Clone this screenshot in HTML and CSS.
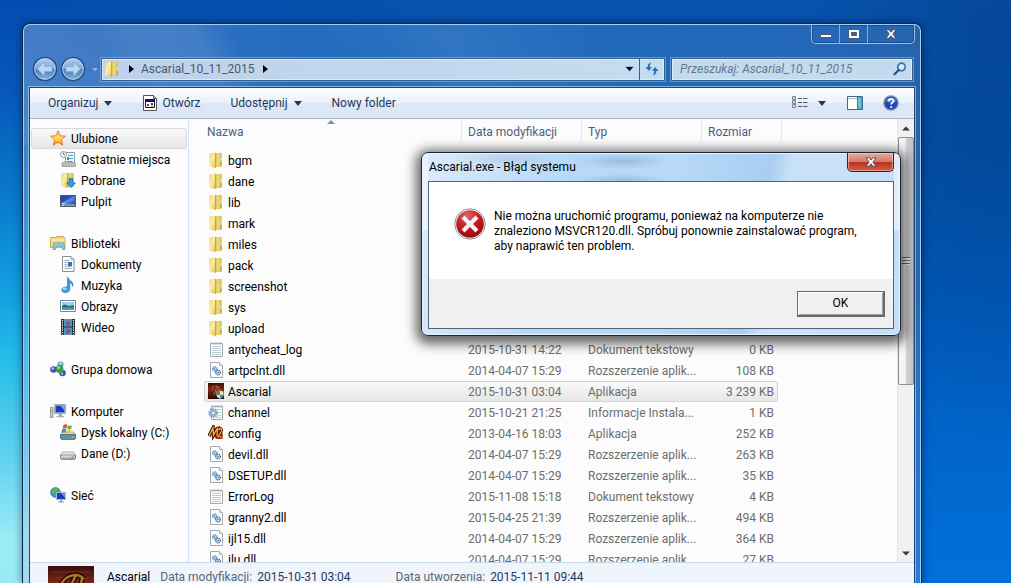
FILE: index.html
```html
<!DOCTYPE html>
<html lang="pl">
<head>
<meta charset="utf-8">
<title>Ascarial_10_11_2015</title>
<link rel="stylesheet" href="styles.css">
</head>
<body>
<svg class="sprites" aria-hidden="true">
  <defs>
    <linearGradient id="gFold" x1="0" x2="1" y1="0" y2="1"><stop offset="0" stop-color="#ecd67a"/><stop offset=".45" stop-color="#f9eea6"/><stop offset="1" stop-color="#dcbc4c"/></linearGradient>
    <linearGradient id="gBlue" x1="0" y1="0" x2="1" y2="1"><stop offset="0" stop-color="#1b3fa8"/><stop offset=".5" stop-color="#5e8fe4"/><stop offset="1" stop-color="#0b2a88"/></linearGradient>
    <linearGradient id="gStar" x1="0" y1="0" x2="0" y2="1"><stop offset="0" stop-color="#ffd060"/><stop offset=".5" stop-color="#ffdf66"/><stop offset="1" stop-color="#f9901c"/></linearGradient>
    <linearGradient id="gGrey" x1="0" y1="0" x2="0" y2="1"><stop offset="0" stop-color="#f5f5f5"/><stop offset="1" stop-color="#9a9fa3"/></linearGradient>
    <radialGradient id="gErr" cx=".4" cy=".2" r=".9"><stop offset="0" stop-color="#e06568"/><stop offset=".5" stop-color="#c41a1e"/><stop offset="1" stop-color="#8a0508"/></radialGradient>
    <linearGradient id="gNav" x1="0" y1="0" x2="0" y2="1"><stop offset="0" stop-color="#b4d0ee"/><stop offset=".48" stop-color="#7fa9d8"/><stop offset=".52" stop-color="#4a82c0"/><stop offset="1" stop-color="#7fb4e4"/></linearGradient>
    <linearGradient id="gExe" x1="0" y1="0" x2="0" y2="1"><stop offset="0" stop-color="#3a0d0b"/><stop offset=".4" stop-color="#802a1a"/><stop offset="1" stop-color="#2a0807"/></linearGradient>
  </defs>
  <symbol id="i-folder" viewBox="0 0 16 16">
    <path d="M7 1.500l6-.7.800.7v12.700l-.8.800H7z" fill="#dfc257"/>
    <path d="M8.300 1.800l3.200-.4v13l-3.200.4z" fill="#efd976"/>
    <path d="M1.200 1.600L6.800.5l1.200.7v14.300l-1 .3-5.800-1.400z" fill="url(#gFold)"/>
    <path d="M7 .7l1.200.5v14.300l-1.200.3z" fill="#c9a63e"/>
    <path d="M12.600 10.500h1v3h-1z" fill="#6fa27c"/><path d="M12.600 6.500h1v2h-1z" fill="#fffbe0"/>
  </symbol>
  <symbol id="i-text" viewBox="0 0 16 16">
    <path d="M2.500 2.500h12v13h-12z" fill="#fcfdfe" stroke="#a3a8ad"/>
    <path d="M3 1v3M5 1v3M7 1v3M9 1v3M11 1v3M13 1v3" stroke="#b0b5b9" stroke-width=".8"/>
    <path d="M4 5.500h9M4 7.500h9M4 9.500h9M4 11.500h9M4 13.500h9" stroke="#b6cdd3"/>
  </symbol>
  <symbol id="i-dll" viewBox="0 0 16 16">
    <path d="M2.500.5h9l3 3v12h-12z" fill="#fcfdfe" stroke="#a3a8ad"/>
    <path d="M11.500.5v3h3" fill="#e8ebee" stroke="#a3a8ad" stroke-width=".8"/>
    <circle cx="6.800" cy="7" r="2.100" fill="#dcecf8" stroke="#4f7fae" stroke-width="1.300" stroke-dasharray="1 .5"/>
    <circle cx="10" cy="10.500" r="2.300" fill="#dcecf8" stroke="#3b6d9f" stroke-width="1.400" stroke-dasharray="1 .5"/>
    <circle cx="6.800" cy="7" r=".7" fill="#2d6aa5"/><circle cx="10" cy="10.500" r=".8" fill="#2d6aa5"/>
  </symbol>
  <symbol id="i-ini" viewBox="0 0 16 16">
    <path d="M3.500 2.500h11v13h-11z" fill="#fcfdfe" stroke="#a3a8ad"/>
    <path d="M4 1v3M6 1v3M8 1v3M10 1v3M12 1v3M14 1v3" stroke="#b0b5b9" stroke-width=".8"/>
    <path d="M7 5.500h6M10 8.500h3M10 11.500h3M8 13.500h5" stroke="#b6cdd3"/>
    <circle cx="5.200" cy="9" r="4" fill="#a9c6dc" stroke="#7c9fbb" stroke-width="1.800" stroke-dasharray="1.500 1"/>
    <circle cx="5.200" cy="9" r="2" fill="#e8f2f8" stroke="#5d87aa" stroke-width=".8"/>
  </symbol>
  <symbol id="i-exe" viewBox="0 0 16 16">
    <path d="M0 0h16v16H0z" fill="url(#gExe)"/>
    <path d="M4 4.500c3-2.500 6-1.500 7 0l-1 7M9 4L6 12M4 5l1 2" fill="none" stroke="#a85c22" stroke-width="1.200"/>
    <path d="M8.500 8.500l3.500-1 3.500 1v3.500c0 2-2 3.200-3.500 4-1.500-.8-3.500-2-3.500-4z" fill="#efe28c"/>
    <path d="M12 7.500l-3.500 1V12H12zM12 12v4c1.500-.8 3.500-2 3.500-4z" fill="#3c7bd0"/>
  </symbol>
  <symbol id="i-config" viewBox="0 0 16 16">
    <path d="M8 2l4-1 2 5 1 6-8 1-2-5z" fill="#c3140e"/>
    <path d="M1 11l4-8 .5 7 4-7-.5 8" fill="none" stroke="#4a1604" stroke-width="3.400"/>
    <path d="M1 11l4-8 .5 7 4-7-.5 8M10.500 5c2-3 4-1 2.500 2l-3 5h5" fill="none" stroke="#4a1604" stroke-width="2.800"/>
    <path d="M1 11l4-8 .5 7 4-7-.5 8M10.500 5c2-3 4-1 2.500 2l-3 5h5" fill="none" stroke="#eeb64a" stroke-width="1.300"/>
    <path d="M8 13.500l3-1.500 4 .500-3 1.500z" fill="#c3140e"/>
  </symbol>
  <symbol id="i-star" viewBox="0 0 16 16">
    <path d="M8 .8l2.100 5 5.400.4-4.100 3.500 1.300 5.400L8 12.200l-4.700 2.900 1.300-5.400L.5 6.200l5.400-.4z" fill="url(#gStar)" stroke="#e0701c" stroke-width=".9"/>
  </symbol>
  <symbol id="i-recent" viewBox="0 0 16 16">
    <path d="M5.500 1.500h9v12h-9z" fill="#f4f9fc" stroke="#8aa0ad"/>
    <path d="M8 4.500h5M8 7.500h5M7 10.500h5" stroke="#4aa0cc"/><path d="M7 6h2v3H7z" fill="#3d97c8"/>
    <path d="M2 12l2-1h9l2.500 1v3.500H2z" fill="#b8bcbf" stroke="#85898c" stroke-width=".6"/>
    <circle cx="3.500" cy="3.500" r="3" fill="#f6f6f6" stroke="#8b9196" stroke-width=".9"/><path d="M3.500 1.500v2H5" fill="none" stroke="#555" stroke-width=".8"/>
  </symbol>
  <symbol id="i-down" viewBox="0 0 16 16">
    <use href="#i-folder" width="16" height="16"/>
    <path d="M9 6.500h4v4.500h2.500L11 15.700l-4.500-4.700H9z" fill="#2aa0e8" stroke="#1668ac" stroke-width=".7"/>
  </symbol>
  <symbol id="i-desk" viewBox="0 0 16 16">
    <path d="M.5 2.500h15v11H.5z" fill="url(#gBlue)" stroke="#4a5866"/><path d="M1 11h14v2H1z" fill="#7098bd"/><path d="M1 3h14L1 10z" fill="#173a9c" opacity=".6"/><path d="M2 10.500h3M2 12.500h2" stroke="#bfe0f4"/>
  </symbol>
  <symbol id="i-lib" viewBox="0 0 16 16">
    <path d="M.5 2.500h5l1-1h7l1.500 2v9H.5z" fill="#eed77b" stroke="#bf9e42" stroke-width=".8"/><path d="M1 5h14" stroke="#fff6bd"/>
    <path d="M3 14.500l1-6.500h9.500l1.500 6.500h-2.500l-.5-3.500H6l-.5 3.500z" fill="#8fd0ee" stroke="#4a9bc7" stroke-width=".8"/>
  </symbol>
  <symbol id="i-doc" viewBox="0 0 16 16">
    <path d="M2.500.5h8.500l3 3v12H2.500z" fill="#fcfdfe" stroke="#898f96"/><path d="M11 .5v3h3" fill="none" stroke="#898f96" stroke-width=".8"/>
    <path d="M4.500 4.500h5M4.500 6.500h3M4.500 8.500h3M4.500 10.500h7M4.500 12.500h7" stroke="#a0a8b4"/><path d="M8 6h4v4H8z" fill="#3472b5"/>
  </symbol>
  <symbol id="i-music" viewBox="0 0 16 16">
    <path d="M8 .5c1 3.500 6.500 4 4.500 9 .2-2.500-1.500-3.500-2.700-4v6.500c0 4.800-8 4.500-8 1 0-2.800 4-3.700 5.700-2.700V.5z" fill="#3e9fe0" stroke="#1767a8" stroke-width=".6"/>
    <ellipse cx="4.600" cy="11.800" rx="2" ry="1.200" fill="#9fd4f6"/>
  </symbol>
  <symbol id="i-pic" viewBox="0 0 16 16">
    <path d="M.5 2.500h15v11H.5z" fill="#fff" stroke="#7d858c"/><path d="M2 4h12v4H2z" fill="#9bd3f2"/><path d="M2 7.500l3-1 4 1.500 5-1V10H2z" fill="#2c7560"/><path d="M2 9.500h12V12H2z" fill="#4b9cc0"/>
  </symbol>
  <symbol id="i-video" viewBox="0 0 16 16">
    <path d="M1 0h14v16H1z" fill="#222b33"/><path d="M4 0h8v7.500H4zM4 8.500h8V16H4z" fill="#4f93cd"/><path d="M6 2l5 2-4 3.500zM7 8.500l4 4-5 3z" fill="#a34c3c"/>
    <path d="M2.500 1v15M13.500 1v15" stroke="#fff" stroke-width="1.200" stroke-dasharray="1.200 1.200"/>
  </symbol>
  <symbol id="i-group" viewBox="0 0 16 16">
    <circle cx="10.500" cy="3.500" r="3" fill="#5f9cc8"/><circle cx="3.500" cy="8.500" r="3.300" fill="#3657b8"/><circle cx="12.500" cy="12" r="3.300" fill="#3a50b4"/><circle cx="9.500" cy="8" r="3.900" fill="#3f9b46"/>
    <circle cx="2.800" cy="7.500" r="1.200" fill="#b5caf5"/><circle cx="8.500" cy="6.500" r="1.500" fill="#a8e09c"/><circle cx="12" cy="12.800" r="1.300" fill="#93a8ef"/><circle cx="10.500" cy="2.500" r="1.200" fill="#cfe6f5"/>
  </symbol>
  <symbol id="i-pc" viewBox="0 0 16 16">
    <path d="M.5 4.500h2.500v10H.5z" fill="#c5cdc4" stroke="#7d8680" stroke-width=".8"/><path d="M1 8h1v1H1z" fill="#46a43e"/>
    <path d="M4.500 1.500h11v9h-11z" fill="#dfe6ea" stroke="#8b98a3" stroke-width=".8"/><path d="M5.500 2.500h9v7h-9z" fill="#1739c4"/><path d="M10 2.500h4.500v5z" fill="#7ba4f2"/><path d="M8.500 11h3.500v2h2v1.200H6.500V13h2z" fill="#a3adb5"/>
  </symbol>
  <symbol id="i-drive" viewBox="0 0 16 16">
    <path d="M2.500 7h11l2 3.500H.5z" fill="#e8eaeb" stroke="#909599" stroke-width=".7"/><path d="M.5 10h15v3.500l-1 .9h-13l-1-.9z" fill="url(#gGrey)" stroke="#6e7478" stroke-width=".8"/><path d="M11.500 11.500h2.500v1.500h-2.500z" fill="#64b83a"/>
  </symbol>
  <symbol id="i-sys" viewBox="0 0 16 16">
    <path d="M2.500 8h11l2 3H.5z" fill="#c8dde4" stroke="#7f959c" stroke-width=".7"/><path d="M.5 10.500h15v4l-1 1h-13l-1-1z" fill="#5f91a4" stroke="#586870" stroke-width=".8"/><path d="M12 12h2v2h-2z" fill="#74d636"/>
    <path d="M3.500 1c1.500-1 3-.8 4 0L6.500 4.500c-1-.8-2.500-.8-4 0z" fill="#e5542a"/><path d="M8.200 1.300c1.300.8 2.600.6 4 0L11 5c-1.300.6-2.600.6-3.800-.2z" fill="#67b443"/><path d="M2.300 5.200c1.500-.9 3-.8 4 0l-1 3.600c-1.200-.8-2.600-.7-4 0z" fill="#398bd4"/><path d="M7 5.600c1.300.8 2.500.6 4 0L10 9c-1.300.6-2.700.6-4-.2z" fill="#f5c231"/>
  </symbol>
  <symbol id="i-net" viewBox="0 0 16 16">
    <circle cx="5.500" cy="5.500" r="5" fill="#3b93d8" stroke="#245f9c" stroke-width=".5"/><path d="M2 2.500c2-2 5-2 6-.5L6 5 3.500 6.500 1 6zM6 7l3 1-2 2.400H5z" fill="#52b94c"/>
    <path d="M6.500 5.500h9v7h-9z" fill="#1a38c0" stroke="#aeb9c2"/><path d="M11 6h4v5z" fill="#6a92ee"/><path d="M10 13h2v1.500h2v1H8v-1h2z" fill="#8f9aa3"/>
  </symbol>
  <symbol id="i-x" viewBox="0 0 12 10">
    <path d="M1 .8h3l2 2.400L8 .8h3L7.800 5 11 9.200H8L6 6.800 4 9.200H1L4.200 5z" fill="#fff" stroke="#4d4a5c" stroke-width=".9"/>
  </symbol>
</svg>

<main class="desktop">
  <section class="explorer" aria-label="Ascarial_10_11_2015">
    <header class="titlebar">
      <div class="caption">
        <button class="cap" aria-label="Minimalizuj"><svg width="12" height="10"><path d="M.500 5.500h11v3H.5z" fill="#fff" stroke="#4d5a75"/></svg></button>
        <button class="cap" aria-label="Maksymalizuj"><svg width="12" height="10"><path fill-rule="evenodd" d="M.5.5h11v9H.5zM3.500 3.500v3h5v-3z" fill="#fff" stroke="#4d5a75"/></svg></button>
        <button class="cap cap-close" aria-label="Zamknij"><svg width="12" height="10"><use href="#i-x"/></svg></button>
      </div>
    </header>

    <div class="navrow">
      <div class="history">
        <button class="round" aria-label="Wstecz"><svg width="26" height="26" viewBox="0 0 26 26"><circle cx="13" cy="13" r="11.500" fill="url(#gNav)" stroke="#274f85" stroke-width="1.500"/><circle cx="13" cy="13" r="10.300" fill="none" stroke="#c4dcf2" stroke-width=".8"/><path d="M5.500 13l7-7v4.500H20v5h-7.500V20z" fill="#bdd6ee" stroke="#7fa6d0" stroke-width=".6"/></svg></button>
        <button class="round" aria-label="Dalej"><svg width="26" height="26" viewBox="0 0 26 26"><circle cx="13" cy="13" r="11.500" fill="url(#gNav)" stroke="#274f85" stroke-width="1.500"/><circle cx="13" cy="13" r="10.300" fill="none" stroke="#c4dcf2" stroke-width=".8"/><path d="M20.500 13l-7-7v4.500H6v5h7.500V20z" fill="#bdd6ee" stroke="#7fa6d0" stroke-width=".6"/></svg></button>
        <button class="drop" aria-label="Ostatnie strony"><svg width="8" height="5"><path d="M0 .5h8L4 5z" fill="#88b5e6" stroke="#2a5c9c" stroke-width=".5"/></svg></button>
      </div>
      <div class="address">
        <svg class="ico" width="16" height="16"><use href="#i-folder"/></svg>
        <svg width="5" height="8"><path d="M0 0l5 4-5 4z" fill="#000"/></svg>
        <button class="crumb">Ascarial_10_11_2015</button>
        <svg width="5" height="8"><path d="M0 0l5 4-5 4z" fill="#000"/></svg>
        <button class="addr-drop" aria-label="Poprzednie lokalizacje"><svg width="9" height="6"><path d="M0 .5h9L4.500 5.500z" fill="#02034c" stroke="#e8f1fa" stroke-width=".5"/></svg></button>
        <button class="refresh" aria-label="Odśwież"><svg width="16" height="14" viewBox="0 0 16 14"><path d="M7.500.5C4.500.5 3.300 2.500 3.300 5H.8l4 4.200L8.500 5H6.200c0-2 .2-3 1.300-4.500zM8.500 13.500c3 0 4.200-2 4.200-4.500h2.500l-4-4.200L7.500 9h2.300c0 2-.2 3-1.300 4.500z" fill="#2d6fbe" stroke="#f0f7ff" stroke-width=".4"/></svg></button>
      </div>
      <label class="search">
        <input type="text" placeholder="Przeszukaj: Ascarial_10_11_2015" aria-label="Przeszukaj">
        <svg width="14" height="14" viewBox="0 0 14 14"><circle cx="8.500" cy="5" r="3.800" fill="#d6ebfb" stroke="#2c72bd" stroke-width="1.700"/><path d="M5.800 8L1.500 12.300" stroke="#1f4f94" stroke-width="2.200" stroke-linecap="round"/></svg>
      </label>
    </div>

    <div class="client">
      <nav class="commands" aria-label="Polecenia">
        <button class="cmd">Organizuj <i class="tri"></i></button>
        <button class="cmd cmd-open"><svg width="16" height="16" viewBox="0 0 16 16"><path d="M1.500.5h10l3 3v12h-13z" fill="#fff" stroke="#555"/><path d="M11.500.5v3h3" fill="#ccc" stroke="#555"/><path d="M3.500 4.500h9v8h-9z" fill="#fff" stroke="#111"/><path d="M3 4h10v3H3z" fill="#0a1470"/><path d="M5 9h2v2H5z" fill="#d02020"/><path d="M9 8h2v2H9z" fill="#2050b0"/><path d="M9 10.500h2v1H9z" fill="#c83030"/></svg> Otwórz</button>
        <button class="cmd">Udostępnij <i class="tri"></i></button>
        <button class="cmd cmd-new">Nowy folder</button>
        <div class="views">
          <button class="cmd" aria-label="Widok"><svg width="16" height="14" viewBox="0 0 16 14"><path d="M.5.500h3v3h-3zM.5 4.500h3v3h-3zM.5 8.500h3v3h-3z" fill="#fff" stroke="#7a8796"/><path d="M1.500 1.500h1v1h-1zM1.500 5.500h1v1h-1zM1.500 9.500h1v1h-1z" fill="#3c5f88"/><path d="M6 2.500h4M11 2.500h4.500M6 6.500h4M11 6.500h4.500M6 10.500h4M11 10.500h4.500" stroke="#4f5d70"/></svg></button>
          <button class="cmd" aria-label="Więcej opcji"><i class="tri"></i></button>
          <button class="cmd" aria-label="Okienko podglądu"><svg width="16" height="14"><path d="M.5.5h15v13H.5z" fill="#fff" stroke="#48657f"/><path d="M1 2.500h9" stroke="#a7bccd"/><path d="M10.500 1h4.500v12h-4.500z" fill="#6cc0da" stroke="#3c7c9c"/></svg></button>
          <button class="cmd" aria-label="Pomoc"><svg width="16" height="16" viewBox="0 0 16 16"><circle cx="8" cy="8" r="7.200" fill="#2347b4" stroke="#8a97b5" stroke-width="1.300"/><path d="M2.500 6C4 1.500 12 1.500 13.500 6 10 8 6 8 2.500 6z" fill="#7c9ae6" opacity=".7"/><path d="M5.700 6.200c0-3 4.800-3 4.800-.3 0 1.700-2.300 1.800-2.300 3.600" fill="none" stroke="#fff" stroke-width="1.700"/><circle cx="8.200" cy="12" r="1.100" fill="#fff"/></svg></button>
        </div>
      </nav>

      <div class="panes">
        <nav class="tree" aria-label="Okienko nawigacji">
          <ul>
            <li><a class="item selected" href="#"><svg class="ico"><use href="#i-star"/></svg>Ulubione</a></li>
            <li><a class="item sub" href="#"><svg class="ico"><use href="#i-recent"/></svg>Ostatnie miejsca</a></li>
            <li><a class="item sub" href="#"><svg class="ico"><use href="#i-down"/></svg>Pobrane</a></li>
            <li><a class="item sub" href="#"><svg class="ico"><use href="#i-desk"/></svg>Pulpit</a></li>
          </ul>
          <ul>
            <li><a class="item" href="#"><svg class="ico"><use href="#i-lib"/></svg>Biblioteki</a></li>
            <li><a class="item sub" href="#"><svg class="ico"><use href="#i-doc"/></svg>Dokumenty</a></li>
            <li><a class="item sub" href="#"><svg class="ico"><use href="#i-music"/></svg>Muzyka</a></li>
            <li><a class="item sub" href="#"><svg class="ico"><use href="#i-pic"/></svg>Obrazy</a></li>
            <li><a class="item sub" href="#"><svg class="ico"><use href="#i-video"/></svg>Wideo</a></li>
          </ul>
          <ul>
            <li><a class="item" href="#"><svg class="ico"><use href="#i-group"/></svg>Grupa domowa</a></li>
          </ul>
          <ul>
            <li><a class="item" href="#"><svg class="ico"><use href="#i-pc"/></svg>Komputer</a></li>
            <li><a class="item sub" href="#"><svg class="ico"><use href="#i-sys"/></svg>Dysk lokalny (C:)</a></li>
            <li><a class="item sub" href="#"><svg class="ico"><use href="#i-drive"/></svg>Dane (D:)</a></li>
          </ul>
          <ul>
            <li><a class="item" href="#"><svg class="ico"><use href="#i-net"/></svg>Sieć</a></li>
          </ul>
        </nav>

        <div class="files">
          <table>
            <colgroup><col class="c-name"><col class="c-date"><col class="c-type"><col class="c-size"></colgroup>
            <thead>
              <tr><th class="sorted">Nazwa</th><th>Data modyfikacji</th><th>Typ</th><th>Rozmiar</th></tr>
            </thead>
            <tbody>
              <tr><td><svg class="ico"><use href="#i-folder"/></svg>bgm</td><td></td><td></td><td></td></tr>
              <tr><td><svg class="ico"><use href="#i-folder"/></svg>dane</td><td></td><td></td><td></td></tr>
              <tr><td><svg class="ico"><use href="#i-folder"/></svg>lib</td><td></td><td></td><td></td></tr>
              <tr><td><svg class="ico"><use href="#i-folder"/></svg>mark</td><td></td><td></td><td></td></tr>
              <tr><td><svg class="ico"><use href="#i-folder"/></svg>miles</td><td></td><td></td><td></td></tr>
              <tr><td><svg class="ico"><use href="#i-folder"/></svg>pack</td><td></td><td></td><td></td></tr>
              <tr><td><svg class="ico"><use href="#i-folder"/></svg>screenshot</td><td></td><td></td><td></td></tr>
              <tr><td><svg class="ico"><use href="#i-folder"/></svg>sys</td><td></td><td></td><td></td></tr>
              <tr><td><svg class="ico"><use href="#i-folder"/></svg>upload</td><td></td><td></td><td></td></tr>
              <tr><td><svg class="ico"><use href="#i-text"/></svg>antycheat_log</td><td>2015-10-31 14:22</td><td>Dokument tekstowy</td><td>0 KB</td></tr>
              <tr><td><svg class="ico"><use href="#i-dll"/></svg>artpclnt.dll</td><td>2014-04-07 15:29</td><td>Rozszerzenie aplik...</td><td>108 KB</td></tr>
              <tr class="selected"><td><svg class="ico"><use href="#i-exe"/></svg>Ascarial</td><td>2015-10-31 03:04</td><td>Aplikacja</td><td>3 239 KB</td></tr>
              <tr><td><svg class="ico"><use href="#i-ini"/></svg>channel</td><td>2015-10-21 21:25</td><td>Informacje Instala...</td><td>1 KB</td></tr>
              <tr><td><svg class="ico"><use href="#i-config"/></svg>config</td><td>2013-04-16 18:03</td><td>Aplikacja</td><td>252 KB</td></tr>
              <tr><td><svg class="ico"><use href="#i-dll"/></svg>devil.dll</td><td>2014-04-07 15:29</td><td>Rozszerzenie aplik...</td><td>263 KB</td></tr>
              <tr><td><svg class="ico"><use href="#i-dll"/></svg>DSETUP.dll</td><td>2014-04-07 15:29</td><td>Rozszerzenie aplik...</td><td>35 KB</td></tr>
              <tr><td><svg class="ico"><use href="#i-text"/></svg>ErrorLog</td><td>2015-11-08 15:18</td><td>Dokument tekstowy</td><td>4 KB</td></tr>
              <tr><td><svg class="ico"><use href="#i-dll"/></svg>granny2.dll</td><td>2015-04-25 21:39</td><td>Rozszerzenie aplik...</td><td>494 KB</td></tr>
              <tr><td><svg class="ico"><use href="#i-dll"/></svg>ijl15.dll</td><td>2014-04-07 15:29</td><td>Rozszerzenie aplik...</td><td>364 KB</td></tr>
              <tr><td><svg class="ico"><use href="#i-dll"/></svg>ilu.dll</td><td>2014-04-07 15:29</td><td>Rozszerzenie aplik...</td><td>27 KB</td></tr>
            </tbody>
          </table>
        </div>

        <div class="scrollbar" aria-hidden="true">
          <span class="step"><svg width="8" height="5"><path d="M0 4.500L4 .5l4 4z" fill="#3a3a3a"/></svg></span>
          <span class="track"><span class="thumb"><i></i></span></span>
          <span class="step"><svg width="8" height="5"><path d="M0 .5h8l-4 4z" fill="#3a3a3a"/></svg></span>
        </div>
      </div>

      <footer class="details">
        <svg class="thumbnail" width="46" height="46" viewBox="0 0 46 46"><path d="M0 0h46v46H0z" fill="url(#gExe)"/><path d="M4 6h38M8 12h32" stroke="#a04a35" opacity=".5"/><path d="M12 20C18 8 30 6 36 13M28 9c-4 8-8 18-14 26M34 12c-1 8-3 16-5 26" fill="none" stroke="#1c0502" stroke-width="5"/><path d="M12 20C18 8 30 6 36 13M28 9c-4 8-8 18-14 26M34 12c-1 8-3 16-5 26" fill="none" stroke="#a8782a" stroke-width="2.500"/></svg>
        <strong class="d-name">Ascarial</strong>
        <dl class="d-mod"><dt>Data modyfikacji:</dt><dd>2015-10-31 03:04</dd></dl>
        <dl class="d-made"><dt>Data utworzenia:</dt><dd>2015-11-11 09:44</dd></dl>
      </footer>
    </div>
  </section>

  <section class="dialog" role="alertdialog" aria-labelledby="dlg-title" aria-describedby="dlg-text">
    <header class="dlg-head">
      <h1 id="dlg-title">Ascarial.exe - Błąd systemu</h1>
      <button class="dlg-close" aria-label="Zamknij"><svg width="12" height="10"><use href="#i-x"/></svg></button>
    </header>
    <div class="dlg-box">
      <div class="dlg-body">
        <svg class="dlg-icon" width="32" height="32" viewBox="0 0 32 32"><circle cx="16" cy="16" r="15.200" fill="#fff" stroke="#8d8d8d"/><circle cx="16" cy="16" r="13.800" fill="url(#gErr)"/><path d="M10.500 10.500l11 11M21.500 10.500l-11 11" stroke="#f3f3f3" stroke-width="4.200" stroke-linecap="square"/></svg>
        <p id="dlg-text">Nie można uruchomić programu, ponieważ na komputerze nie<br>znaleziono MSVCR120.dll. Spróbuj ponownie zainstalować program,<br>aby naprawić ten problem.</p>
      </div>
      <div class="dlg-foot"><button class="ok">OK</button></div>
    </div>
  </section>
</main>
</body>
</html>
```

FILE: styles.css
```css
* { box-sizing: border-box; }
html, body { height: 100%; }
body {
  margin: 0;
  overflow: hidden;
  font: 12px/15px Roboto, "Open Sans", sans-serif;
  color: #000;
}
button, input { font: inherit; color: inherit; }
button { border: 0; padding: 0; background: none; }
a { color: inherit; text-decoration: none; }
svg { display: block; flex: none; }
.sprites { position: absolute; width: 0; height: 0; }
.ico { width: 16px; height: 16px; }

.desktop {
  position: relative;
  height: 100%;
  overflow: hidden;
  background:
    radial-gradient(ellipse 200px 420px at 100% 5%, rgba(0, 50, 110, .35), transparent),
    linear-gradient(180deg, #0852ad 0%, #0350a8 25%, #0058b8 50%, #0066cc 78%, #0070da 100%);
}
.desktop::before {
  content: "";
  position: absolute;
  inset: 0;
  background: linear-gradient(180deg, #044db0 0%, #0657b8 15%, #0878cc 33%, #129fe0 50%, #27bdea 62%, #5fd2ee 78%, #9cecf6 93%, #9aeaf6 100%);
  mask-image: linear-gradient(90deg, #000 0, #000 30px, transparent 400px);
}

/* Explorer window */
.explorer {
  position: absolute;
  left: 23px;
  right: 90px;
  top: 24px;
  bottom: 0;
  display: flex;
  flex-direction: column;
  padding: 0 6px;
  border: 1px solid #a5cdf0;
  border-bottom: 0;
  border-radius: 7px 7px 0 0;
  background:
    linear-gradient(62deg, rgba(255, 255, 255, .06) 14%, rgba(255, 255, 255, .1) 17%, rgba(255, 255, 255, .1) 24%, transparent 28%, transparent 36%, rgba(255, 255, 255, .08) 50%, transparent 66%) 0 0 / 100% 120px no-repeat,
    linear-gradient(90deg, rgba(170, 190, 225, .32), rgba(100, 175, 240, .26) 40%, rgba(140, 175, 220, .24));
  box-shadow: 0 0 0 1px #0c2a4c, 0 0 8px 1px rgba(0, 15, 50, .5);
}
.titlebar { flex: none; height: 32px; display: flex; justify-content: flex-end; }
.caption {
  display: flex;
  height: 19px;
  margin-right: -1px;
  border: 1px solid #9dbfe2;
  border-top: 0;
  border-radius: 0 0 5px 5px;
  box-shadow: inset 0 0 0 1px rgba(20, 55, 105, .55);
}
.cap { width: 28px; display: grid; place-items: center; border-right: 1px solid #86aad4; }
.cap-close { width: 46px; border-right: 0; }

.navrow { flex: none; display: flex; align-items: center; height: 24px; margin-bottom: 6px; }
.history { display: flex; align-items: center; width: 71px; gap: 2px; padding-left: 2px; }
.round { width: 26px; height: 26px; border-radius: 50%; }
.drop { margin-left: 3px; }
.address, .search {
  display: flex;
  align-items: center;
  height: 23px;
  border: 1px solid #35618f;
  outline: 1px solid rgba(150, 190, 230, .55);
  background: #c3daef;
  box-shadow: inset 0 0 0 1px #dcebf8;
  color: #4b5b6c;
}
.address { flex: 1; gap: 9px; padding-left: 2px; margin-right: 6px; background: linear-gradient(90deg, #bed0ea, #c4dcf0); }
.address .ico + svg { margin-right: -2px; }
.addr-drop { margin-left: auto; }
.refresh { width: 25px; height: 21px; margin-left: -4px; display: grid; place-items: center; border-left: 1px solid #35618f; }
.search { width: 242px; margin-right: 1px; padding: 0 5px 0 8px; }
.search input { flex: 1; min-width: 0; padding: 0; border: 0; outline: 0; background: none; }
.search input::placeholder { color: #66788c; font-style: italic; opacity: 1; }

.client {
  flex: 1;
  min-height: 0;
  display: flex;
  flex-direction: column;
  border: 1px solid #20466f;
  border-bottom: 0;
  margin: 0 -1px;
  outline: 1px solid rgba(170, 210, 245, .7);
  background: #fcfcfc;
}
.commands {
  flex: none;
  display: flex;
  align-items: center;
  height: 31px;
  padding: 0 15px 0 18px;
  border-bottom: 1px solid #a9b7cc;
  background: linear-gradient(180deg, #fdfeff, #e9f1fa 50%, #dce7f5 52%, #dde8f6);
  color: #1e395b;
}
.cmd { display: flex; align-items: center; gap: 6px; }
.cmd-open { margin: 0 30px; gap: 4px; }
.cmd-new { margin-left: 30px; }
.tri { border: 4px solid transparent; border-top: 5px solid #1e395b; border-bottom: 0; }
.views { margin-left: auto; display: flex; align-items: center; }
.views .cmd:nth-child(2) { margin: 0 21px 0 10px; }
.views .cmd:nth-child(4) { margin-left: 20px; }

.panes { flex: 1; min-height: 0; display: flex; }
.tree { flex: none; width: 159px; padding: 9px 1px 0; border-right: 1px solid #d3e4f4; overflow: hidden; }
.tree ul { list-style: none; margin: 0 0 21px; padding: 0; }
.item { display: flex; align-items: center; gap: 5px; height: 21px; padding: 2px 0 0 18px; border: 1px solid transparent; white-space: nowrap; }
.item .ico { margin-bottom: 3px; }
.item.sub { padding-left: 28px; }
.item.selected { border-color: #d9d9d9; border-radius: 3px; background: linear-gradient(180deg, #fafafa, #e6e6e6); }

.files { flex: 1; min-width: 0; padding-left: 15px; overflow: hidden; }
.files table { border-collapse: separate; border-spacing: 0; table-layout: fixed; width: 574px; }
.c-name { width: 257px; }
.c-date, .c-type { width: 120px; }
.c-size { width: 77px; }
.files th {
  position: relative;
  height: 26px;
  padding: 0 7px;
  text-align: left;
  font-weight: 400;
  color: #4c607a;
}
.files th:first-child { padding-left: 3px; }
.files th::after { content: ""; position: absolute; right: -1px; top: 0; width: 1px; height: 22px; background: #dfe8f2; }
.files th:last-child::after { right: -4px; }
.files th.sorted::before { content: ""; position: absolute; left: 123px; top: 1px; border: 4px solid transparent; border-bottom-color: #6f9cb4; border-top: 0; }
.files thead::after { content: ""; display: block; height: 5px; }
.files td { height: 21px; padding: 2px 7px 0; color: #6d6d6d; white-space: nowrap; overflow: hidden; }
.files td:first-child { padding-left: 4px; color: #000; }
.files td .ico { display: inline-block; vertical-align: top; margin: -2px 4px 0 0; }
.files td:last-child { text-align: right; padding: 2px 4px 0 0; }
.files tr.selected td { background: linear-gradient(180deg, #fafafa, #e6e6e6); border: 0 solid #d4d4d4; border-width: 1px 0; }
.files tr.selected td:first-child { border-left-width: 1px; border-radius: 3px 0 0 3px; padding-left: 3px; }
.files tr.selected td:last-child { border-right-width: 1px; border-radius: 0 3px 3px 0; padding-right: 3px; }

.scrollbar { flex: none; width: 17px; display: flex; flex-direction: column; background: #f0f0f0; border-left: 1px solid #e4e4e4; }
.step { height: 18px; display: grid; place-items: center; }
.track { flex: 1; }
.thumb { display: grid; place-items: center; height: 61%; border: 1px solid #8f8f8f; border-radius: 2px; background: linear-gradient(90deg, #f5f5f5 45%, #d3d3d6 50%, #c0c0c5); }
.thumb i { width: 8px; height: 8px; background: repeating-linear-gradient(180deg, #666 0 1px, #f5f5f5 1px 3px); }

.details { flex: none; display: flex; height: 21px; padding: 3px 0 0 18px; border-top: 1px solid #c7d9ec; background: #f0f4fb; color: #1e395b; overflow: hidden; }
.details dl { display: flex; gap: 5px; margin: 4px 0 0; white-space: nowrap; }
.details dt { color: #5a6779; }
.details dd { margin: 0; }
.d-name { margin: 4px 10px 0 13px; font-weight: 400; color: #000; }
.details .d-made { margin-left: 45px; }

/* Error dialog */
.dialog {
  position: absolute;
  left: 421px;
  top: 152px;
  width: 480px;
  padding: 0 6px 6px;
  border: 1px solid #1b2430;
  border-radius: 7px;
  background:
    linear-gradient(180deg, rgba(255, 255, 255, .4), rgba(255, 255, 255, .5) 42%, transparent 43%) 0 0 / 6px 100% no-repeat,
    linear-gradient(180deg, rgba(255, 255, 255, .4), rgba(255, 255, 255, .5) 42%, transparent 43%) 100% 0 / 6px 100% no-repeat,
    radial-gradient(ellipse 50px 8px at 84px 6px, rgba(60, 90, 130, .12), transparent),
    radial-gradient(ellipse 46px 8px at 202px 8px, rgba(60, 90, 130, .22), transparent),
    radial-gradient(ellipse 46px 6px at 202px 27px, rgba(60, 90, 130, .22), transparent),
    linear-gradient(100deg, #dcebfa, #b6d7f7 30%, #b8d9f8 50%, #a9cdf1 69%, #c9e1f8 73%, #c6dff8);
  box-shadow: inset 0 0 0 1px #e9f4ff, 0 3px 12px 5px rgba(0, 0, 0, .6);
}
.dlg-head { display: flex; justify-content: space-between; height: 28px; padding: 5px 0 0 1px; }
.dlg-head h1 { margin: 0; font-size: 12px; line-height: 18px; font-weight: 400; }
.dlg-close {
  width: 47px;
  height: 19px;
  margin-top: -5px;
  display: grid;
  place-items: center;
  border: 1px solid #4a1c18;
  border-top: 0;
  border-radius: 0 0 5px 5px;
  background: linear-gradient(180deg, #e8aa9e, #d4796b 48%, #b8301a 50%, #d0604c);
  box-shadow: inset 0 0 0 1px rgba(255, 220, 210, .5);
}
.dlg-box { border: 1px solid #50657c; background: #fff; }
.dlg-body { display: flex; gap: 8px; height: 97px; padding: 26px 0 0 25px; }
.dlg-body p { margin: 1px 0 0; white-space: nowrap; }
.dlg-foot { display: flex; justify-content: flex-end; padding: 12px 8px 11px; background: #f0f0f0; }
.ok {
  width: 88px;
  height: 26px;
  border: 1px solid #696969;
  border-width: 1px 2px 2px 1px;
  background: #f0f0f0;
  box-shadow: inset 1px 1px 0 #fff, inset -1px -1px 0 #a0a0a0;
}
```
